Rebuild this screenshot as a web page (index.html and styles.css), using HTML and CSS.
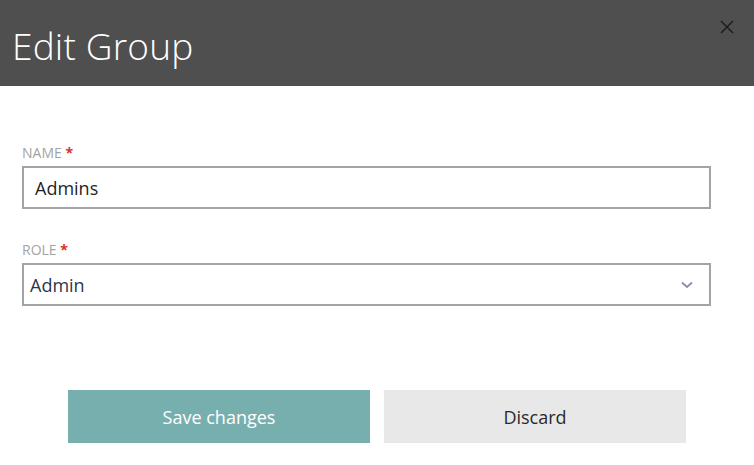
FILE: index.html
```html
<!DOCTYPE html>
<html>
<head>
<meta charset="utf-8">
<link rel="stylesheet" href="styles.css">
</head>
<body>
<div class="dialog">
  <header class="head">
    <h1 class="title">Edit Group</h1>
    <button class="close" aria-label="Close">
      <svg width="14" height="14" viewBox="0 0 14 14"><path d="M1 1 L13 13 M13 1 L1 13" stroke="#1e1e1e" stroke-width="1.6" fill="none"/></svg>
    </button>
  </header>
  <form class="body">
    <div class="field">
      <label class="label">NAME <span class="req">*</span></label>
      <div class="input">Admins</div>
    </div>
    <div class="field">
      <label class="label">ROLE <span class="req">*</span></label>
      <div class="select">
        <span>Admin</span>
        <svg width="12" height="8" viewBox="0 0 12 8"><path d="M1 1.5 L6 6 L11 1.5" stroke="#8592a6" stroke-width="1.8" fill="none"/></svg>
      </div>
    </div>
    <div class="actions">
      <button type="button" class="btn save">Save changes</button>
      <button type="button" class="btn discard">Discard</button>
    </div>
  </form>
</div>
</body>
</html>
```

FILE: styles.css
```css
* { box-sizing: border-box; }
html, body { margin: 0; padding: 0; background: #fff; }
body { font-family: "Open Sans", "Noto Sans", sans-serif; width: 754px; height: 465px; overflow: hidden; }
.dialog { width: 754px; }
.head {
  height: 86px;
  background: #4f4f4f;
  display: flex;
  align-items: flex-start;
  justify-content: space-between;
  padding: 0 20px 0 12px;
}
.title {
  margin: 21px 0 0;
  font-weight: 300;
  font-size: 37px;
  line-height: 50px;
  color: #fff;
  letter-spacing: 0.2px;
}
.close {
  margin-top: 20px;
  width: 14px; height: 14px;
  padding: 0; border: 0; background: none;
  display: flex;
}
.body { padding: 57px 43px 0 22px; display: flex; flex-direction: column; }
.field { display: flex; flex-direction: column; margin-bottom: 31px; }
.field + .field { margin-bottom: 0; }
.label {
  font-size: 14px;
  line-height: 20px;
  color: #a3a3a3;
  margin-bottom: 3px;
}
.req { color: #d9312b; font-weight: 700; }
.input, .select {
  height: 43px;
  border: 2px solid #a3a3a3;
  display: flex;
  align-items: center;
  font-size: 18px;
}
.input { padding-left: 11px; color: #1f1f1f; }
.select { padding: 0 16px 0 6px; color: #2b3550; justify-content: space-between; }
.select svg { margin-top: 1px; }
.actions {
  display: flex;
  gap: 14px;
  margin-top: 84px;
  padding-left: 46px;
}
.btn {
  width: 302px;
  height: 53px;
  border: 0;
  font-family: inherit;
  font-size: 18px;
  padding: 0;
}
.save { background: #77afaf; color: #fff; }
.discard { background: #e8e8e8; color: #2a2a2a; }
```
